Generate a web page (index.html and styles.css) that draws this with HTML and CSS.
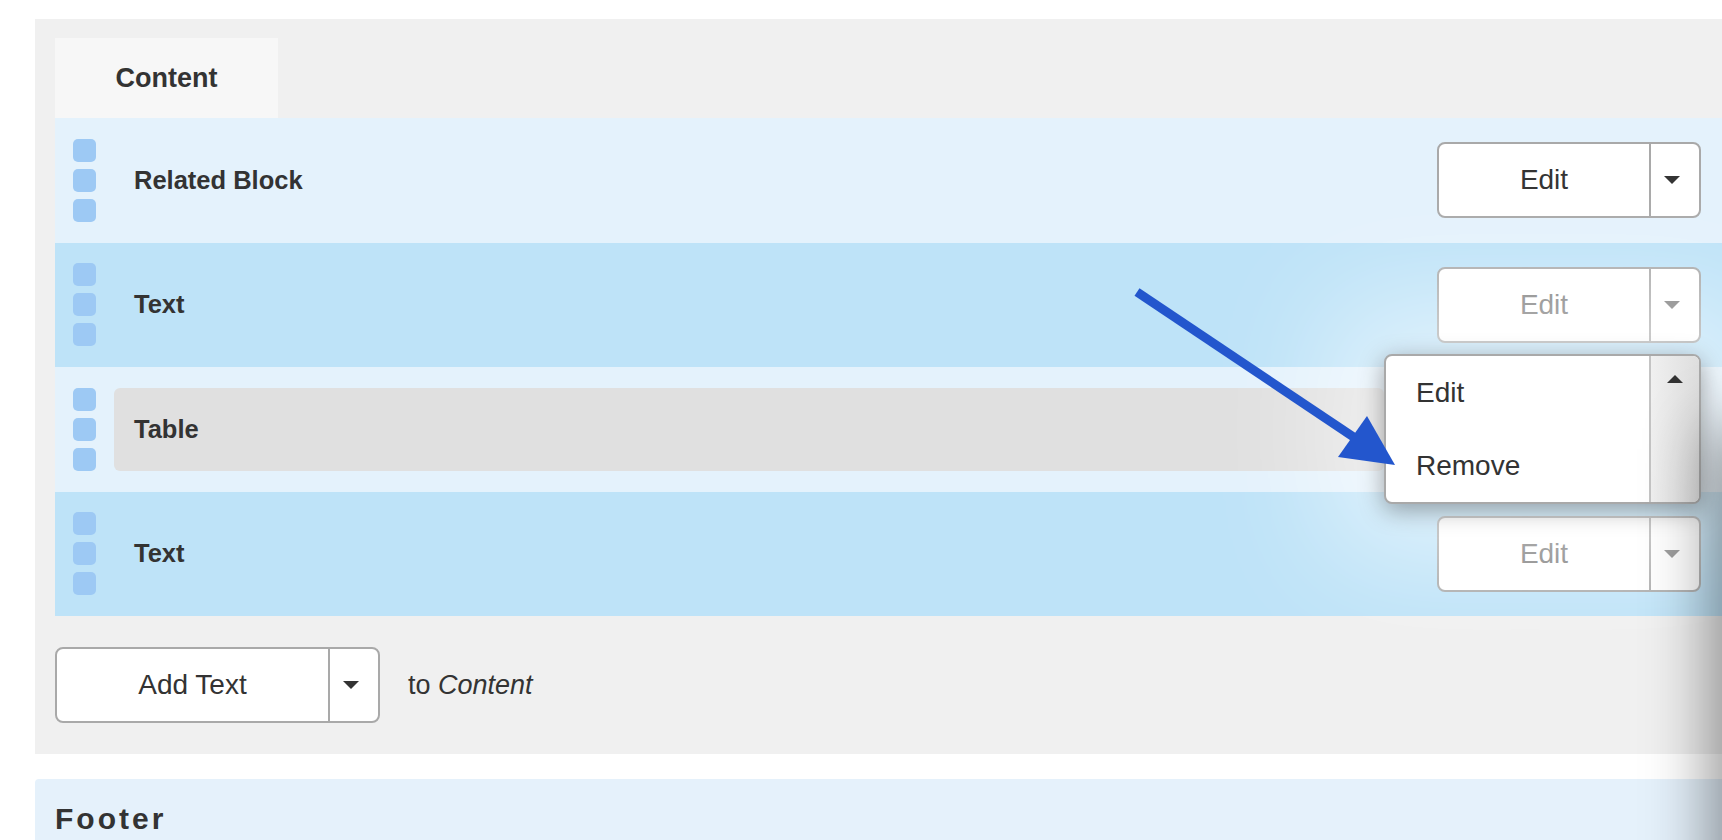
FILE: index.html
```html
<!DOCTYPE html>
<html lang="en">
<head>
    <meta charset="UTF-8">
    <meta name="viewport" content="width=device-width, initial-scale=1.0">
    <title>Content Blocks</title>
    <link rel="stylesheet" href="styles.css">
</head>
<body>
    <div class="page">
        <div class="region">
            <div class="tabs">
                <div class="tab">Content</div>
            </div>
            <div class="blocks">
                <div class="block">
                    <div class="handle"><span></span><span></span><span></span></div>
                    <div class="label">Related Block</div>
                    <div class="split">
                        <button class="split-main">Edit</button>
                        <button class="split-toggle"><span class="caret"></span></button>
                    </div>
                </div>
                <div class="block alt">
                    <div class="handle"><span></span><span></span><span></span></div>
                    <div class="label">Text</div>
                    <div class="split muted">
                        <button class="split-main">Edit</button>
                        <button class="split-toggle"><span class="caret"></span></button>
                    </div>
                </div>
                <div class="block">
                    <div class="handle"><span></span><span></span><span></span></div>
                    <div class="label boxed">Table</div>
                    <div class="menu">
                        <ul class="menu-items">
                            <li>Edit</li>
                            <li>Remove</li>
                        </ul>
                        <div class="menu-toggle"><span class="caret up"></span></div>
                    </div>
                </div>
                <div class="block alt">
                    <div class="handle"><span></span><span></span><span></span></div>
                    <div class="label">Text</div>
                    <div class="split muted">
                        <button class="split-main">Edit</button>
                        <button class="split-toggle"><span class="caret"></span></button>
                    </div>
                </div>
            </div>
            <div class="add-bar">
                <div class="split add">
                    <button class="split-main">Add Text</button>
                    <button class="split-toggle"><span class="caret"></span></button>
                </div>
                <span class="add-target">to <em>Content</em></span>
            </div>
        </div>
        <div class="footer-region">
            <h2>Footer</h2>
        </div>

        <!-- annotation arrow -->
        <svg class="pointer" width="1722" height="840" viewBox="0 0 1722 840">
            <line x1="1137" y1="292" x2="1355" y2="438" stroke="#2356cd" stroke-width="9"/>
            <polygon points="1395,465 1367,416 1338,457" fill="#2356cd"/>
        </svg>
        <div class="drawer-edge"></div>
    </div>
</body>
</html>
```

FILE: styles.css
```css
html, body {
    margin: 0;
    padding: 0;
    overflow: hidden;
}
body {
    font-family: "Liberation Sans", Arial, sans-serif;
    color: #333;
    background: #fff;
}
.page {
    position: relative;
    height: 840px;
    padding-top: 19px;
    box-sizing: border-box;
    overflow: hidden;
}
.region {
    margin-left: 35px;
    background-color: #f0f0f0;
    padding: 19px 0 31px 20px;
}
.tabs {
    display: flex;
}
.tab {
    width: 223px;
    height: 80px;
    background: #f7f7f7;
    display: flex;
    align-items: center;
    justify-content: center;
    font-size: 27px;
    font-weight: bold;
}
.block {
    height: 124.5px;
    display: flex;
    align-items: center;
    padding: 0 21px 0 18px;
    background-color: #e4f2fc;
}
.block.alt {
    background-color: #bee3f8;
}
.handle {
    display: flex;
    flex-direction: column;
    gap: 7px;
}
.handle span {
    width: 23px;
    height: 23px;
    border-radius: 5px;
    background-color: #9dc9f4;
}
.label {
    flex: 1;
    margin-left: 38px;
    font-size: 25.5px;
    font-weight: bold;
}
.label.boxed {
    margin-left: 18px;
    padding-left: 20px;
    height: 83px;
    display: flex;
    align-items: center;
    background: #e0e0e0;
    border-radius: 6px;
}
.split {
    display: flex;
    width: 264px;
    height: 76px;
    box-sizing: border-box;
    border: 2px solid #a9a9a9;
    border-radius: 8px;
    background: #fff;
    overflow: hidden;
}
.split button {
    border: none;
    background: none;
    padding: 0;
    margin: 0;
    font-family: inherit;
    color: #333;
    cursor: pointer;
}
.split-main {
    width: 210px;
    font-size: 28px;
}
.split .split-toggle {
    flex: 1;
    border-left: 2px solid #a9a9a9;
    display: flex;
    align-items: center;
    justify-content: center;
    padding-right: 6px;
}
.split.muted button {
    color: #7a7a7a;
}
.split.muted .caret {
    border-top-color: #7a7a7a;
}
.caret {
    width: 0;
    height: 0;
    border-left: 8px solid transparent;
    border-right: 8px solid transparent;
    border-top: 8px solid #333;
}
.caret.up {
    border-top: none;
    border-bottom: 8px solid #333;
}
.menu {
    position: relative;
    z-index: 2;
    display: flex;
    width: 317px;
    height: 150px;
    flex-shrink: 0;
    box-sizing: border-box;
    border: 2px solid #a9a9a9;
    border-radius: 8px;
    background: #fff;
    box-shadow: 0 6px 24px rgba(0, 0, 0, 0.35), 0 0 120px 55px rgba(255, 255, 255, 0.55);
}
.menu-items {
    flex: 1;
    list-style: none;
    margin: 0;
    padding: 0 0 0 30px;
}
.menu-items li {
    height: 73px;
    line-height: 73px;
    font-size: 28px;
}
.menu-toggle {
    width: 50px;
    border-left: 2px solid #c4c4c4;
    border-radius: 0 6px 6px 0;
    background: linear-gradient(to right, #f0f0f0, #dedede);
    display: flex;
    justify-content: center;
    align-items: flex-start;
    padding-top: 19px;
    box-sizing: border-box;
}
.add-bar {
    display: flex;
    align-items: center;
    gap: 28px;
    margin-top: 31px;
}
.split.add {
    width: 325px;
}
.split.add .split-main {
    width: 271px;
}
.add-target {
    font-size: 27px;
}
.footer-region {
    margin: 25px 0 0 35px;
    background-color: #e5f1fb;
    border-radius: 4px 0 0 0;
    padding: 22px 20px;
    height: 200px;
}
.footer-region h2 {
    margin: 0;
    font-size: 30px;
    line-height: 36px;
    letter-spacing: 3px;
    font-weight: bold;
}
.pointer {
    position: absolute;
    top: 0;
    left: 0;
    z-index: 3;
    pointer-events: none;
}
.drawer-edge {
    position: absolute;
    left: 100%;
    top: 440px;
    width: 200px;
    height: 800px;
    z-index: 4;
    box-shadow: 0 0 60px 12px rgba(0, 0, 0, 0.42);
}
```
